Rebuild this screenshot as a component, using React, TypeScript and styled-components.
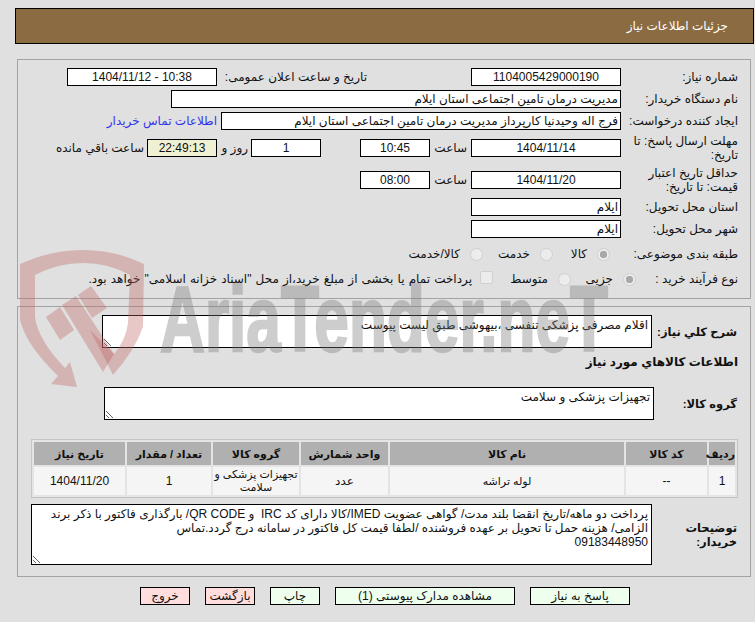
import React from 'react'
import styled, { createGlobalStyle } from 'styled-components'

const GlobalStyle = createGlobalStyle`
  html, body {
    margin: 0;
    padding: 0;
    background: #e0e0e0;
  }
  * {
    box-sizing: border-box;
  }
`

const Page = styled.div`
  position: relative;
  width: 755px;
  height: 622px;
  overflow: hidden;
  direction: rtl;
  padding: 8px 1px 0 15px;
  color: #111;
  font-family: 'Liberation Sans', 'DejaVu Sans', sans-serif;
  font-size: 12px;
  line-height: 14px;
`

const TitleBar = styled.div`
  display: flex;
  align-items: center;
  height: 36px;
  padding-right: 25px;
  background: #8b6c42;
  border: 1px solid #000;
  color: #fff;
  font-size: 12px;
`

const Panel = styled.section<{ $top: number; $height: number }>`
  display: flex;
  flex-direction: column;
  height: ${({ $height }) => $height}px;
  margin: ${({ $top }) => $top}px 3px 0 2px;
  padding: 8px 9px 0 0;
  border: 1px solid #a3a3a3;
`

const Row = styled.div<{ $height?: number; $top?: number }>`
  display: flex;
  align-items: center;
  height: ${({ $height }) => $height ?? 18}px;
  margin-top: ${({ $top }) => $top ?? 0}px;
`

const Label = styled.label<{ $width: number; $bold?: boolean; $inset?: number }>`
  flex: none;
  width: ${({ $width }) => $width}px;
  padding-right: ${({ $inset }) => $inset ?? 3}px;
  font-size: ${({ $bold }) => ($bold ? 11.5 : 12)}px;
  font-weight: ${({ $bold }) => ($bold ? 700 : 400)};
`

const Field = styled.div<{ $width: number; $start?: boolean; $tone?: string }>`
  flex: none;
  width: ${({ $width }) => $width}px;
  height: 18px;
  padding: 0 2px;
  background: ${({ $tone }) => $tone ?? '#fff'};
  border: 1px solid #000;
  line-height: 17px;
  text-align: ${({ $start }) => ($start ? 'right' : 'center')};
  white-space: nowrap;
  overflow: hidden;
`

const ContactLink = styled.a`
  margin-right: 4px;
  color: #3333ee;
  white-space: nowrap;
`

const Choice = styled.div<{ $width?: number; $inset?: number; $spread?: number }>`
  display: flex;
  align-items: center;
  flex: none;
  gap: 5px;
  width: ${({ $width }) => ($width ? `${$width}px` : 'auto')};
  margin-right: ${({ $inset }) => $inset ?? 0}px;
  word-spacing: ${({ $spread }) => $spread ?? 0}px;
  white-space: nowrap;
`

const Radio = styled.input.attrs({ type: 'radio', disabled: true })`
  appearance: none;
  flex: none;
  width: 13px;
  height: 13px;
  margin: 0 0 0 5px;
  border: 1px solid #cfcfcf;
  border-radius: 50%;
  background: #ececec;

  &:checked {
    background: radial-gradient(circle, #a8a8a8 0 3.4px, #ececec 4px);
  }
`

const CheckBox = styled.input.attrs({ type: 'checkbox', disabled: true })`
  appearance: none;
  flex: none;
  width: 13px;
  height: 13px;
  margin: -3px 0 0 3px;
  border: 1px solid #cfcfcf;
  border-radius: 2px;
  background: #ececec;
`

const Note = styled.textarea<{ $width: number; $height: number }>`
  flex: none;
  display: block;
  width: ${({ $width }) => $width}px;
  height: ${({ $height }) => $height}px;
  padding: 2px 3px 0;
  background: #fff;
  border: 1px solid #000;
  border-radius: 0;
  outline: none;
  overflow: hidden;
  resize: both;
  color: #111;
  font: inherit;
`

const SectionTitle = styled.h3`
  margin: 7px 0 0;
  padding-right: 3px;
  font-size: 12px;
  line-height: 14px;
`

const ItemsTable = styled.table`
  width: 707px;
  margin: 19px 3px 0 0;
  border: 1px solid #c4c4c4;
  border-spacing: 2px;
  table-layout: fixed;
  font-size: 12px;
  background: #e4e4e4;

  th {
    height: 23px;
    padding: 0;
    background: #b0b0b0;
    font-size: 11px;
  }

  td {
    height: 28px;
    padding: 0;
    background: #f5f5f5;
    line-height: 13px;
    text-align: center;
  }
`

const Small = styled.span`
  font-size: 11px;
`

const Footer = styled.div`
  display: flex;
  gap: 15px;
  margin-top: 10px;
  padding-right: 124px;
`

const ActionButton = styled.button<{ $width: number; $danger?: boolean }>`
  width: ${({ $width }) => $width}px;
  height: 18px;
  padding: 0;
  background: ${({ $danger }) => ($danger ? '#ffdddd' : '#eeffee')};
  border: 1px solid #000;
  border-radius: 0;
  color: #111;
  font: inherit;
  line-height: 16px;
`

const Watermark = styled.svg`
  position: absolute;
  top: 0;
  left: 0;
  pointer-events: none;
`

const columns = [
  { title: 'ردیف', width: 26 },
  { title: 'کد کالا', width: 81 },
  { title: 'نام کالا', width: 234 },
  { title: 'واحد شمارش', width: 87 },
  { title: 'گروه کالا', width: 86 },
  { title: 'تعداد / مقدار', width: 84 },
  { title: 'تاریخ نیاز', width: 91 },
]

const buyerNote =
  'پرداخت دو ماهه/تاریخ انقضا بلند مدت/ گواهی عضویت IMED/کالا دارای کد IRC  و QR CODE/ بارگذاری فاکتور با ذکر برند الزامی/ هزینه حمل تا تحویل بر عهده فروشنده /لطفا قیمت کل فاکتور در سامانه درج گردد.تماس\n09183448950'

function AriaWatermark() {
  return (
    <Watermark width="755" height="622" viewBox="0 0 755 622">
      <g fill="rgb(190,100,100)" fillOpacity="0.36">
        <path d="M20 264 Q50 250 83 250 Q116 250 144 264 L143 327 Q135 350 113 375 L90 330 L114 354 Q126 340 128 323 L130 275 Q108 263 83 263 Q58 263 35 275 L35 317 Q38 340 65 368 L70 362 L77 387 L51 384 L58 376 Q26 345 20 320 Z" />
        <path d="M46 317 L60 307 L74 330 L60 340 Z" />
        <path d="M62 305 L76 296 L114 354 L103 372 Z" />
        <path d="M78 295 L91 286 L107 308 L92 318 Z" />
      </g>
      <g opacity="0.36">
        <text
          x="160"
          y="351"
          textLength="448"
          lengthAdjust="spacingAndGlyphs"
          direction="ltr"
          fill="rgb(120,120,120)"
          stroke="rgb(120,120,120)"
          strokeWidth="2.5"
          fontFamily="'Liberation Sans', sans-serif"
          fontWeight="700"
          fontSize="92"
        >
          AriaTender.neT
        </text>
      </g>
    </Watermark>
  )
}

export default function App() {
  return (
    <Page>
      <GlobalStyle />
      <TitleBar>جزئیات اطلاعات نیاز</TitleBar>

      <Panel $top={15} $height={240}>
        <Row>
          <Label $width={120}>شماره نیاز:</Label>
          <Field $width={150}>1104005429000190</Field>
          <Label $width={254} $inset={104}>
            تاریخ و ساعت اعلان عمومی:
          </Label>
          <Field $width={150} dir="ltr">
            1404/11/12 - 10:38
          </Field>
        </Row>
        <Row $top={4}>
          <Label $width={120}>نام دستگاه خریدار:</Label>
          <Field $width={450} $start>
            مدیریت درمان تامین اجتماعی استان ایلام
          </Field>
        </Row>
        <Row $top={4}>
          <Label $width={120}>ایجاد کننده درخواست:</Label>
          <Field $width={400} $start>
            فرج اله وحیدنیا کارپرداز مدیریت درمان تامین اجتماعی استان ایلام
          </Field>
          <ContactLink>اطلاعات تماس خریدار</ContactLink>
        </Row>
        <Row $height={32} $top={2}>
          <Label $width={120}>مهلت ارسال پاسخ: تا تاریخ:</Label>
          <Field $width={150}>1404/11/14</Field>
          <Label $width={41} $inset={4}>
            ساعت
          </Label>
          <Field $width={70}>10:45</Field>
          <Label $width={39} />
          <Field $width={70}>1</Field>
          <Label $width={34} $inset={3}>
            روز و
          </Label>
          <Field $width={70} $tone="#f0f0d2">
            22:49:13
          </Field>
          <Label $width={94} $inset={3}>
            ساعت باقي مانده
          </Label>
        </Row>
        <Row $height={32}>
          <Label $width={120}>حداقل تاریخ اعتبار قیمت: تا تاریخ:</Label>
          <Field $width={150}>1404/11/20</Field>
          <Label $width={41} $inset={4}>
            ساعت
          </Label>
          <Field $width={70}>08:00</Field>
        </Row>
        <Row $top={2}>
          <Label $width={120}>استان محل تحویل:</Label>
          <Field $width={150} $start>
            ایلام
          </Field>
        </Row>
        <Row $top={4}>
          <Label $width={120}>شهر محل تحویل:</Label>
          <Field $width={150} $start>
            ایلام
          </Field>
        </Row>
        <Row $height={22} $top={5}>
          <Label $width={120}>طبقه بندی موضوعی:</Label>
          <Choice $width={57} $inset={11}>
            <Radio name="subject" defaultChecked />
            کالا
          </Choice>
          <Choice $width={70}>
            <Radio name="subject" />
            خدمت
          </Choice>
          <Choice>
            <Radio name="subject" />
            کالا/خدمت
          </Choice>
        </Row>
        <Row $height={22} $top={3}>
          <Label $width={105}>نوع فرآیند خرید :</Label>
          <Choice $width={65}>
            <Radio name="process" defaultChecked />
            جزیی
          </Choice>
          <Choice $width={78}>
            <Radio name="process" />
            متوسط
          </Choice>
          <Choice $spread={0.8}>
            <CheckBox />
            پرداخت تمام یا بخشی از مبلغ خرید،از محل "اسناد خزانه اسلامی" خواهد بود.
          </Choice>
        </Row>
      </Panel>

      <Panel $top={7} $height={271}>
        <Row $height={33}>
          <Label $width={89} $bold $inset={4}>
            شرح کلي نياز:
          </Label>
          <Note
            $width={550}
            $height={33}
            readOnly
            defaultValue="اقلام مصرفی پزشکی تنفسی ،بیهوشی طبق لیست پیوست"
          />
        </Row>
        <SectionTitle>اطلاعات کالاهاي مورد نياز</SectionTitle>
        <Row $height={33} $top={18}>
          <Label $width={87} $bold $inset={4}>
            گروه کالا:
          </Label>
          <Note $width={550} $height={33} readOnly defaultValue="تجهیزات پزشکی و سلامت" />
        </Row>
        <ItemsTable>
          <colgroup>
            {columns.map((column) => (
              <col key={column.title} width={column.width} />
            ))}
          </colgroup>
          <thead>
            <tr>
              {columns.map((column) => (
                <th key={column.title}>{column.title}</th>
              ))}
            </tr>
          </thead>
          <tbody>
            <tr>
              <td>1</td>
              <td>--</td>
              <td>
                <Small>لوله تراشه</Small>
              </td>
              <td>عدد</td>
              <td>
                <Small>تجهیزات پزشکی و سلامت</Small>
              </td>
              <td>1</td>
              <td>1404/11/20</td>
            </tr>
          </tbody>
        </ItemsTable>
        <Row $height={61} $top={6}>
          <Label $width={89} $bold $inset={4}>
            توضیحات خریدار:
          </Label>
          <Note $width={621} $height={61} readOnly defaultValue={buyerNote} />
        </Row>
      </Panel>

      <Footer>
        <ActionButton $width={100}>پاسخ به نیاز</ActionButton>
        <ActionButton $width={180}>مشاهده مدارک پیوستی (1)</ActionButton>
        <ActionButton $width={50}>چاپ</ActionButton>
        <ActionButton $width={50} $danger>
          بازگشت
        </ActionButton>
        <ActionButton $width={50} $danger>
          خروج
        </ActionButton>
      </Footer>

      <AriaWatermark />
    </Page>
  )
}
